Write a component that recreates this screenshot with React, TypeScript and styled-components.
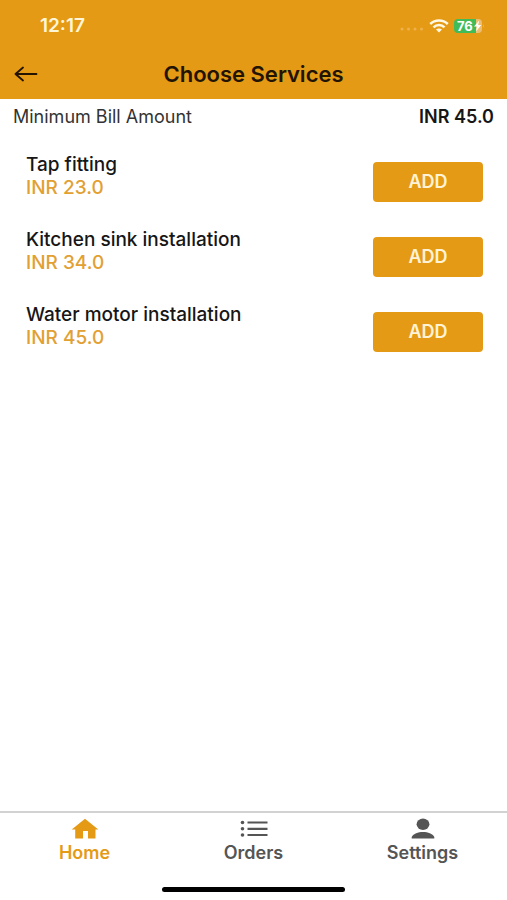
import React from "react";
import styled, { createGlobalStyle } from "styled-components";

const accent = "#e59a15";

const GlobalStyle = createGlobalStyle`
  *, *::before, *::after { box-sizing: border-box; }
  body { margin: 0; background: #fff; }
  button, a { font: inherit; }
`;

const Screen = styled.div`
  min-height: 100vh;
  display: flex;
  flex-direction: column;
  background: #fff;
  color: #161616;
  font-family: Inter, "Liberation Sans", sans-serif;
  font-size: 18px;
  line-height: 22px;
`;

const Header = styled.header`
  background: ${accent};
`;

const StatusBar = styled.div`
  height: 52px;
  padding: 0 22px 0 40px;
  display: flex;
  align-items: center;
  justify-content: space-between;
`;

const Clock = styled.time`
  color: #fff6da;
  font-size: 19px;
  font-weight: 600;
`;

const StatusIcons = styled.div`
  display: flex;
  align-items: center;
  gap: 5px;
`;

const TitleBar = styled.div`
  height: 47px;
  padding: 0 12px 4px;
  display: grid;
  grid-template-columns: 28px 1fr 28px;
  align-items: center;
`;

const BackButton = styled.button`
  height: 28px;
  padding: 0;
  border: 0;
  background: none;
  color: #221400;
  display: grid;
  place-items: center;
  cursor: pointer;
`;

const Title = styled.h1`
  margin: 0;
  color: #221400;
  font-size: 22px;
  font-weight: 600;
  line-height: 24px;
  text-align: center;
`;

const Main = styled.main`
  flex: 1;
`;

const Minimum = styled.div`
  padding: 7px 13px;
  display: flex;
  justify-content: space-between;
  color: #333;
`;

const MinimumAmount = styled.strong`
  color: #161616;
  font-weight: 600;
`;

const ServiceList = styled.ul`
  margin: 0;
  padding: 18px 24px 0 26px;
  list-style: none;
  display: grid;
  gap: 26px;
`;

const ServiceRow = styled.li`
  display: flex;
  align-items: flex-end;
  justify-content: space-between;
`;

const ServiceText = styled.div`
  align-self: flex-start;
  font-size: 19px;
  font-weight: 500;
  line-height: 23px;
`;

const ServiceName = styled.h2`
  margin: 0;
  font-size: inherit;
  font-weight: inherit;
`;

const ServicePrice = styled.p`
  margin: 0;
  color: #e2a033;
`;

const AddButton = styled.button`
  width: 110px;
  height: 40px;
  margin-top: 9px;
  border: 0;
  border-radius: 4px;
  background: ${accent};
  color: #fff3d6;
  font-weight: 600;
  cursor: pointer;
`;

const TabBar = styled.nav`
  border-top: 2px solid #d2d2d2;
  padding-top: 5px;
  display: grid;
  grid-template-columns: repeat(3, 1fr);
`;

const Tab = styled.a<{ $active?: boolean }>`
  display: flex;
  flex-direction: column;
  align-items: center;
  gap: 2px;
  color: ${(p) => (p.$active ? accent : "#555")};
  font-weight: 600;
  text-decoration: none;
`;

const HomeIndicator = styled.div`
  width: 36%;
  height: 5px;
  margin: 23px auto 8px;
  border-radius: 3px;
  background: #000;
`;

const services = [
  { name: "Tap fitting", price: "INR 23.0" },
  { name: "Kitchen sink installation", price: "INR 34.0" },
  { name: "Water motor installation", price: "INR 45.0" },
];

const SignalDots = () => (
  <svg width="24" height="12" viewBox="0 0 24 12" fill="#efb14b" aria-hidden="true">
    <circle cx="2" cy="9" r="1.5" />
    <circle cx="8.5" cy="9" r="1.5" />
    <circle cx="15" cy="9" r="1.5" />
    <circle cx="21.5" cy="9" r="1.5" />
  </svg>
);

const Wifi = () => (
  <svg width="20" height="14" viewBox="0 0 20 14" fill="none" stroke="#fff8e2" strokeWidth="2.5" aria-hidden="true">
    <path d="M1.200 5C6 .4 14 .4 18.800 5" />
    <path d="M4.500 8.300c3-3 8-3 11 0" />
    <path d="M7 10.600Q10 8.200 13 10.600L10 13.400z" fill="#fff8e2" stroke="none" />
  </svg>
);

const Battery = () => (
  <svg width="31" height="14" viewBox="0 0 31 14" role="img" aria-label="Battery 76%, charging">
    <path d="M4 0H23V14H4a4 4 0 0 1-4-4V4a4 4 0 0 1 4-4z" fill="#3fbb58" />
    <path d="M22 0h2a4 4 0 0 1 4 4v6a4 4 0 0 1-4 4h-2z" fill="#edbd72" />
    <path d="M29 5q1.500 2 0 4z" fill="#edbd72" />
    <text x="3" y="11.500" fill="#fff" fontFamily="Inter, sans-serif" fontSize="13" fontWeight="700">76</text>
    <path d="M25.200 1.500l-5.200 6h3l-1 5 5.200-6.500h-3z" fill="#fff" />
  </svg>
);

const BackArrow = () => (
  <svg width="24" height="16" viewBox="0 0 24 16" fill="none" stroke="currentColor" strokeWidth="1.8" strokeLinecap="round" strokeLinejoin="round" aria-hidden="true">
    <path d="M22.500 8H1.500M9 1.500L1.500 8L9 14.500" />
  </svg>
);

const HomeIcon = () => (
  <svg width="28" height="22" viewBox="0 0 28 22" fill="currentColor" aria-hidden="true">
    <path d="M14 .8L27.300 11.600H24.500V20.500H17V13H12V20.500H4.200V11.600H.7z" />
  </svg>
);

const OrdersIcon = () => (
  <svg width="28" height="22" viewBox="0 0 28 22" fill="currentColor" aria-hidden="true">
    <circle cx="2.500" cy="4.500" r="1.800" />
    <circle cx="2.500" cy="10.800" r="1.800" />
    <circle cx="2.500" cy="17" r="1.800" />
    <path d="M7.500 3.400H27.500v2.200H7.500zM7.500 9.700H27.500v2.200H7.500zM7.500 15.900H27.500v2.200H7.500z" />
  </svg>
);

const SettingsIcon = () => (
  <svg width="28" height="22" viewBox="0 0 28 22" fill="currentColor" aria-hidden="true">
    <ellipse cx="14" cy="6.300" rx="6.400" ry="5.700" />
    <path d="M2.700 20.500V19C4.500 15.500 9 14 14 14s9.500 1.500 11.300 5v1.500z" />
  </svg>
);

export default function App() {
  return (
    <Screen>
      <GlobalStyle />
      <Header>
        <StatusBar>
          <Clock>12:17</Clock>
          <StatusIcons>
            <SignalDots />
            <Wifi />
            <Battery />
          </StatusIcons>
        </StatusBar>
        <TitleBar>
          <BackButton type="button" aria-label="Back">
            <BackArrow />
          </BackButton>
          <Title>Choose Services</Title>
        </TitleBar>
      </Header>
      <Main>
        <Minimum>
          <span>Minimum Bill Amount</span>
          <MinimumAmount>INR 45.0</MinimumAmount>
        </Minimum>
        <ServiceList>
          {services.map((service) => (
            <ServiceRow key={service.name}>
              <ServiceText>
                <ServiceName>{service.name}</ServiceName>
                <ServicePrice>{service.price}</ServicePrice>
              </ServiceText>
              <AddButton type="button" aria-label={`ADD ${service.name}`}>
                ADD
              </AddButton>
            </ServiceRow>
          ))}
        </ServiceList>
      </Main>
      <TabBar aria-label="Main">
        <Tab href="#home" $active aria-current="page">
          <HomeIcon />
          Home
        </Tab>
        <Tab href="#orders">
          <OrdersIcon />
          Orders
        </Tab>
        <Tab href="#settings">
          <SettingsIcon />
          Settings
        </Tab>
      </TabBar>
      <HomeIndicator />
    </Screen>
  );
}
